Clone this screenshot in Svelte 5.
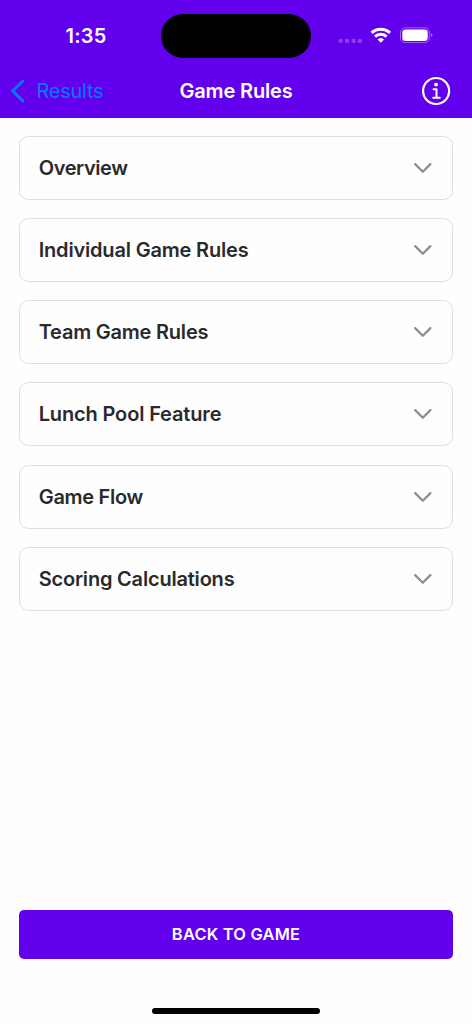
<script>
  const sections = [
    { title: 'Overview', spacing: -0.4 },
    { title: 'Individual Game Rules', spacing: -0.18 },
    { title: 'Team Game Rules', spacing: -0.22 },
    { title: 'Lunch Pool Feature', spacing: -0.15 },
    { title: 'Game Flow', spacing: -0.29 },
    { title: 'Scoring Calculations', spacing: -0.2 }
  ];
</script>

<div class="screen">
  <header>
    <div class="status">
      <span class="time">1:35</span>
      <div class="island"></div>
      <div class="indicators">
        <svg width="96" height="20" viewBox="0 0 96 20">
          <g fill="#fff" opacity=".26">
            <circle cx="3.7" cy="12.9" r="2.2" />
            <circle cx="10.1" cy="12.9" r="2.2" />
            <circle cx="16.5" cy="12.9" r="2.2" />
            <circle cx="22.8" cy="12.9" r="2.2" />
          </g>
          <g fill="none" stroke="#fff" stroke-width="3">
            <path d="M34.6 4.9a13.1 13.1 0 0 1 18.4 0" />
            <path d="M38 8.6a8.2 8.2 0 0 1 11.6 0" />
          </g>
          <path d="M40.8 11.5a4.6 4.6 0 0 1 6 0L43.8 14.6z" fill="#fff" stroke="#fff" stroke-width=".4" />
          <rect x="63.5" y="-.2" width="28.8" height="14.8" rx="4.7" fill="none" stroke="#fff" stroke-opacity=".4" />
          <rect x="65.3" y="1.5" width="25.4" height="11.4" rx="3.2" fill="#fff" />
          <path d="M93.8 4.9q1.7.6 1.7 2.2T93.8 9.3z" fill="#fff" opacity=".45" />
        </svg>
      </div>
    </div>
    <nav>
      <button class="back">
        <svg width="16" height="24" viewBox="0 0 16 24"><path d="M12.9 2 2.6 12l10.3 10" fill="none" stroke="#007aff" stroke-width="2.8" stroke-linecap="round" stroke-linejoin="round" /></svg>
        <span>Results</span>
      </button>
      <h1>Game Rules</h1>
      <button class="info" aria-label="Info">
        <svg width="30" height="30" viewBox="0 0 30 30">
          <circle cx="15.1" cy="15" r="13" fill="none" stroke="#fff" stroke-width="2.2" />
          <circle cx="15" cy="8.6" r="1.9" fill="#fff" />
          <path d="M12.6 13.2h2.9v8.3M12.2 21.7h6.6" fill="none" stroke="#fff" stroke-width="2" stroke-linecap="round" stroke-linejoin="round" />
        </svg>
      </button>
    </nav>
  </header>

  <main>
    {#each sections as section}
      <button class="card">
        <span style="letter-spacing: {section.spacing}px">{section.title}</span>
        <svg width="20" height="12" viewBox="0 0 20 12"><path d="M2.2 2.1 9.8 9.7l7.6-7.6" fill="none" stroke="#8e8e93" stroke-width="2.3" stroke-linecap="round" stroke-linejoin="round" /></svg>
      </button>
    {/each}
  </main>

  <footer>
    <button class="return"><span>BACK TO GAME</span></button>
    <div class="home"></div>
  </footer>
</div>

<style>
  .screen {
    height: 1024px;
    display: flex;
    flex-direction: column;
    background: #fefefe;
    font-family: Inter, "Liberation Sans", sans-serif;
    overflow: hidden;
  }
  button {
    border: 0;
    padding: 0;
    margin: 0;
    background: none;
    font: inherit;
  }
  svg { display: block; overflow: visible; }
  header {
    height: 117.5px;
    background: #6200ee;
    flex: none;
  }
  .status {
    height: 65px;
    box-sizing: border-box;
    padding-top: 13.5px;
    display: grid;
    grid-template-columns: 161px 150px 161px;
  }
  .time {
    padding: 9px 0 0 65.5px;
    color: #fff;
    font-size: 20px;
    line-height: 26px;
    font-weight: 600;
    letter-spacing: .2px;
  }
  .island { height: 44px; border-radius: 22px; background: #000; }
  .indicators { padding: 14px 0 0 26px; }
  nav {
    height: 52px;
    display: grid;
    grid-template-columns: 130px 1fr 130px;
    align-items: center;
  }
  .back {
    display: flex;
    align-items: center;
    gap: 11px;
    padding-left: 9.5px;
    color: #007aff;
    font-size: 20px;
    line-height: 26px;
    letter-spacing: -.25px;
  }
  h1 {
    margin: 0;
    text-align: center;
    color: #fff;
    font-size: 20px;
    line-height: 26px;
    font-weight: 600;
    letter-spacing: -.15px;
    white-space: nowrap;
  }
  .info { justify-self: end; margin-right: 21px; }
  main {
    flex: 1;
    display: flex;
    flex-direction: column;
    gap: 18.1px;
    padding: 18.7px 19px 0;
  }
  .card {
    height: 64px;
    box-sizing: border-box;
    border: 1.3px solid #dedee5;
    border-radius: 9.5px;
    background: #fefefe;
    display: flex;
    align-items: center;
    justify-content: space-between;
    padding: 0 19.5px 0 18.7px;
    color: #2a2a2c;
    font-size: 20px;
    line-height: 26px;
    font-weight: 600;
  }
  footer {
    height: 114.5px;
    flex: none;
    display: flex;
    flex-direction: column;
    align-items: center;
    padding: 0 19px;
  }
  .return {
    align-self: stretch;
    height: 49.5px;
    border-radius: 5px;
    background: #6200ee;
    color: #fff;
    font-size: 16.4px;
    font-weight: 600;
    letter-spacing: .22px;
  }
  .home {
    width: 168px;
    height: 6px;
    margin-top: 48.5px;
    border-radius: 3px;
    background: #000;
  }
</style>
